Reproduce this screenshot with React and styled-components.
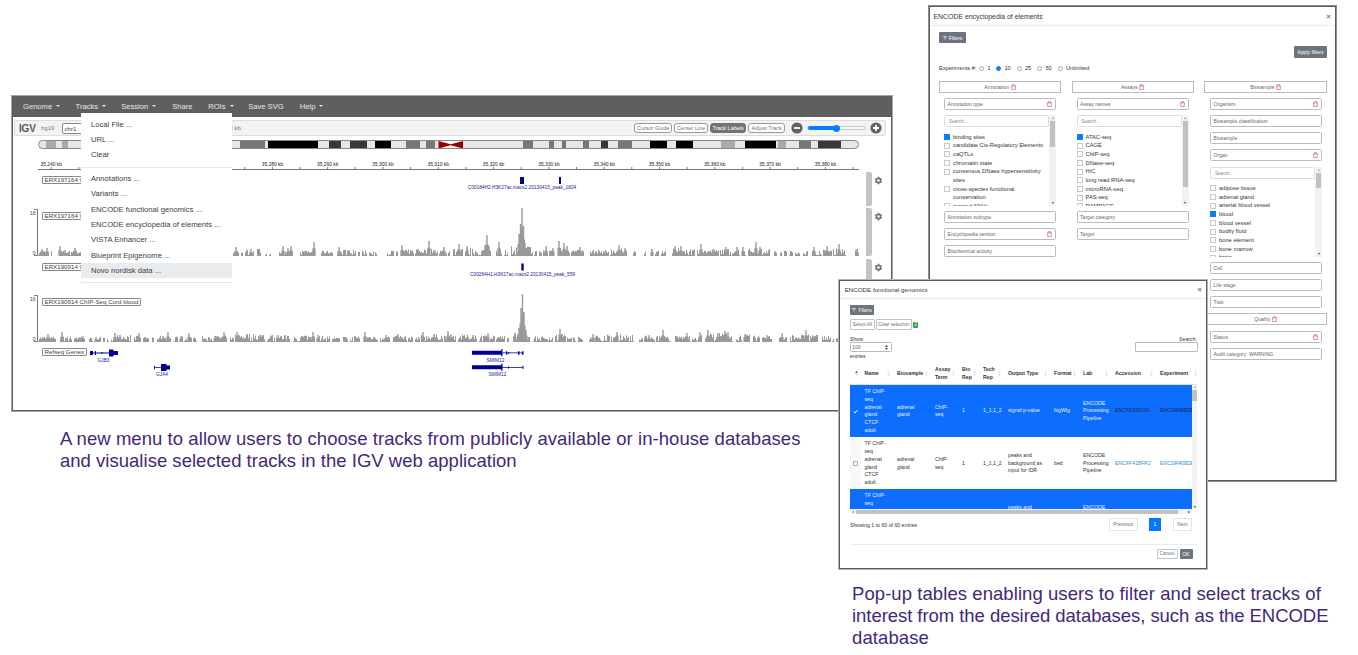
import React from "react";
import styled, { createGlobalStyle } from "styled-components";

const Global = createGlobalStyle`
  * { box-sizing: border-box; }
  body { margin: 0; background: #fff; overflow: hidden; font-family: "Liberation Sans", Arial, sans-serif; }
  svg { display: block; flex: none; }
`;

const Canvas = styled.main`
  position: relative;
  width: 1358px;
  height: 655px;
  background: #fff;
  overflow: hidden;
`;

const Frame = styled.section`
  position: absolute;
  left: ${(p) => p.$x + 1}px;
  top: ${(p) => p.$y + 1}px;
  width: ${(p) => p.$w - 2}px;
  height: ${(p) => p.$h - 2}px;
  border: 1px solid #5c5c5c;
  outline: 1px solid ${(p) => p.$halo};
  background: #fff;
  display: flex;
  flex-direction: column;
`;

const Caption = styled.p`
  position: absolute;
  left: ${(p) => p.$x}px;
  top: ${(p) => p.$y}px;
  margin: 0;
  font-size: 18.5px;
  line-height: 22px;
  color: #43277a;
  white-space: nowrap;
`;

const Line = styled.span`
  display: block;
  letter-spacing: ${(p) => p.$ls}px;
`;

/* ---------- genome browser ---------- */

const Nav = styled.nav`
  display: flex;
  align-items: center;
  height: 20px;
  padding: 0 0 2px 10px;
  background: #5f5f5f;
  color: #e8e8e8;
  font-size: 7.6px;
  flex: none;
`;

const NavItem = styled.span`
  display: flex;
  align-items: center;
  gap: 4px;
  width: ${(p) => p.$w}px;
  white-space: nowrap;
`;

const Caret = styled.i`
  border: 2px solid transparent;
  border-top-color: #e8e8e8;
  border-bottom: 0;
`;

const Toolbar = styled.div`
  display: flex;
  align-items: center;
  height: 16px;
  margin: 3px 5px 0 1px;
  padding: 0 3px 0 4px;
  border: 1px solid #dcdcdc;
  border-radius: 2px;
  background: #f3f3f3;
  color: #777;
  font-size: 6px;
  flex: none;
`;

const Logo = styled.b`
  width: 22px;
  font-size: 10px;
  letter-spacing: -0.2px;
  color: #5a5a5a;
`;

const Genome = styled.span`
  width: 20.5px;
`;

const ChrSelect = styled.span`
  width: 46px;
  height: 11px;
  padding-left: 2px;
  border: 1px solid #888;
  border-radius: 2px;
  background: #fff;
  color: #444;
  font-size: 6.2px;
  line-height: 9px;
`;

const Span = styled.span`
  flex: 1;
  padding-left: 122px;
`;

const Toggle = styled.span`
  width: ${(p) => p.$w}px;
  height: 10px;
  margin-right: 1.8px;
  border: 1px solid ${(p) => (p.$on ? "#737373" : "#999")};
  border-radius: 3px;
  background: ${(p) => (p.$on ? "#737373" : "#fff")};
  color: ${(p) => (p.$on ? "#fff" : "#777")};
  font-size: 5.5px;
  line-height: 8px;
  text-align: center;
  white-space: nowrap;
`;

const Zoom = styled.div`
  display: flex;
  align-items: center;
  gap: 4px;
  margin-left: 4px;
`;

const Slider = styled.div`
  display: flex;
  align-items: center;
  width: 59px;
  height: 4px;
  border: 1px solid #ccc;
  border-radius: 2px;
  background: #f7f7f7;
`;

const SliderFill = styled.div`
  width: 27px;
  height: 4px;
  border-radius: 2px 0 0 2px;
  background: #0a7bff;
  flex: none;
`;

const SliderThumb = styled.div`
  width: 7px;
  height: 7px;
  margin-left: -2px;
  border-radius: 50%;
  background: #0a7bff;
  flex: none;
`;

const TrackRow = styled.div`
  position: relative;
  display: flex;
  height: ${(p) => p.$h}px;
  margin-bottom: ${(p) => p.$gap}px;
  flex: none;
`;

const TrackHandle = styled.div`
  width: 6px;
  height: 100%;
  margin-left: 3px;
  border-radius: 0 2px 2px 0;
  background: #c4c4c4;
`;

const GearBox = styled.div`
  padding: 4px 0 0 2px;
`;

const TrackLabel = styled.span`
  position: absolute;
  left: 29px;
  top: ${(p) => p.$top}px;
  height: 8px;
  padding: 0 1.5px;
  border: 1px solid #888;
  border-radius: 1px;
  background: #fff;
  color: #444;
  font-size: 6.2px;
  line-height: 6px;
  white-space: nowrap;
`;

const Menu = styled.div`
  position: absolute;
  left: 68px;
  top: 16px;
  width: 151px;
  height: 171px;
  padding-top: 3.7px;
  background: #fff;
`;

const MenuItem = styled.div`
  height: 15.36px;
  padding-left: 10px;
  line-height: 15.4px;
  font-size: 7.65px;
  color: #3b4045;
  white-space: nowrap;
  background: ${(p) => (p.$active ? "#e9ecef" : "transparent")};
`;

const MenuLine = styled.hr`
  margin: ${(p) => p.$m};
  border: 0;
  border-top: 1px solid #e6e9ec;
`;

const bands = [
  [46, 56, "#aaa"], [62, 68, "#aaa"], [81, 84, "#777"], [240, 265, "#777"], [268, 318, "#000"],
  [329, 341, "#383838"], [350, 367, "#383838"], [375, 391, "#000"], [406, 420, "#777"], [426, 435, "#777"],
  [523, 533, "#777"], [549, 554, "#777"], [562, 566, "#777"], [583, 589, "#777"], [601, 608, "#383838"],
  [618, 632, "#777"], [650, 667, "#000"], [676, 693, "#000"], [721, 735, "#aaa"], [745, 776, "#000"],
  [778, 786, "#aaa"], [799, 811, "#777"], [818, 841, "#383838"],
];

const Ideogram = () => (
  <svg width="850" height="36" viewBox="13 136 850 36">
    <rect x="38.5" y="140.5" width="820" height="8" rx="4" fill="#e6e6e6" />
    {bands.map(([a, b, c]) => <rect key={a} x={a} y="141" width={b - a} height="7.5" fill={c} />)}
    <rect x="438.5" y="141" width="24.5" height="7.5" fill="#fff" />
    <path d="M438.5 141L450.7 144.3L463 141V148.5L450.7 145.2L438.5 148.5Z" fill="#960000" />
    <rect x="38.5" y="140.5" width="820" height="8" rx="4" fill="none" stroke="#888" />
    <path d="M38 169.5H859" stroke="#777" />
    {Array.from({ length: 15 }, (_, i) => {
      const x = 51.2 + i * 55.3;
      return (
        <g key={i}>
          <text x={x} y="166.3" textAnchor="middle" fontSize="4.9" fill="#222">{`35,${240 + i * 10} kb`}</text>
          <path d={`M${x} 167v2M${x + 27.6} 167v2`} stroke="#777" />
        </g>
      );
    })}
  </svg>
);

/* coverage: [start, end, base height], then [position, peak height] */
const runsA = [
  [38, 49, 3], [51, 52, 3], [60, 81, 3], [233, 239, 3], [241, 243, 4], [245, 254, 4], [257, 261, 5], [265, 267, 2], [269, 271, 2], [279, 293, 3],
  [300, 315, 3], [321, 333, 3], [337, 356, 4], [358, 360, 4], [362, 367, 4], [369, 374, 3], [375, 377, 3], [387, 394, 3], [396, 398, 3], [401, 414, 4], [415, 434, 5], [435, 438, 4],
  [439, 447, 4], [448, 450, 4], [453, 463, 5], [465, 471, 6], [472, 491, 5], [496, 502, 6], [504, 508, 4], [511, 533, 8], [534, 537, 3], [539, 542, 3],
  [543, 548, 4], [549, 554, 5], [558, 570, 9], [571, 584, 4], [590, 609, 4], [610, 627, 5], [633, 636, 3], [644, 646, 2],
  [651, 653, 4], [655, 659, 4], [661, 666, 4], [672, 695, 5], [697, 704, 5], [704, 719, 4], [720, 731, 5], [732, 740, 5], [742, 746, 5],
  [748, 770, 5], [774, 777, 3], [780, 782, 4], [784, 787, 4], [789, 793, 3], [795, 800, 3], [803, 808, 3], [812, 822, 4], [823, 832, 4], [833, 846, 5], [855, 859, 5],
];
const spikesA = [
  [42, 7], [47, 8], [60, 10], [65, 6], [75, 8], [236, 9], [251, 7], [283, 10], [288, 8], [291, 10], [305, 5], [314, 14], [339, 9], [349, 6],
  [402, 11], [418, 7], [429, 15], [435, 6], [444, 9], [459, 12], [467, 10], [487, 21], [485, 11], [489, 10], [499, 14], [519, 22], [522, 48],
  [520.5, 32], [523.5, 30], [525, 13], [546, 10], [553, 8], [559, 15], [564, 13], [567, 10], [580, 9], [619, 11], [625, 8], [652, 7], [675, 10], [681, 10],
  [701, 12], [713, 7], [726, 9], [737, 9], [743, 9], [756, 14], [760, 9], [814, 9], [827, 10], [839, 12], [857, 7],
];
const runsB = [
  [38, 56, 3], [60, 72, 3], [74, 85, 4], [89, 93, 2], [95, 101, 3], [103, 105, 2], [107, 109, 3], [111, 131, 5], [134, 141, 4],
  [143, 149, 4], [152, 154, 2], [157, 171, 4], [174, 178, 3], [180, 183, 3], [184, 192, 4], [193, 197, 3], [202, 227, 4], [230, 234, 2],
  [235, 265, 6], [267, 275, 5], [276, 290, 4], [293, 315, 5], [317, 330, 4], [332, 340, 2], [343, 348, 3], [350, 353, 3], [354, 360, 4],
  [364, 378, 4], [380, 390, 4], [393, 407, 4], [408, 413, 3], [415, 420, 4], [421, 443, 5], [444, 456, 5], [458, 477, 5],
  [479, 495, 5], [496, 505, 4], [507, 509, 2], [513, 530, 7], [533, 542, 4], [542, 553, 3], [555, 566, 5], [567, 572, 3],
  [573, 576, 3], [578, 583, 3], [589, 610, 5], [611, 634, 5], [639, 643, 2], [644, 655, 4], [656, 671, 4], [675, 691, 4], [692, 697, 3],
  [698, 702, 5], [705, 733, 7], [736, 742, 5], [744, 750, 5], [753, 760, 4], [762, 772, 4], [779, 787, 5], [790, 818, 5], [822, 831, 4], [832, 834, 3], [836, 839, 3],
];
const spikesB = [
  [48, 8], [62, 10], [83, 6], [96, 5], [115, 9], [120, 7], [139, 9], [145, 5], [163, 6], [168, 10], [181, 6], [189, 9], [215, 6], [224, 10],
  [237, 10], [247, 8], [260, 7], [278, 7], [285, 7], [313, 10], [318, 7], [365, 10], [386, 7], [398, 8], [423, 10], [434, 8],
  [448, 11], [451, 8], [473, 7], [488, 9], [515, 9], [522.5, 48], [521, 34], [524, 30], [526, 12], [519, 14], [560, 13], [562, 8],
  [593, 8], [617, 10], [649, 7], [663, 12], [687, 9], [700, 10], [708, 12], [718, 9], [725, 11], [728, 10], [745, 8], [767, 7], [782, 9],
  [806, 12], [815, 6],
];

function coverage(runs, spikes, base) {
  const heights = new Map();
  let seed = 7;
  const rnd = () => {
    seed = (seed * 16807) % 2147483647;
    return seed / 2147483647;
  };
  runs.forEach(([a, b, h]) => {
    for (let x = a; x < b; x += 1) heights.set(x, rnd() < 0.1 ? 1 : 2 + rnd() * (h + 0.5));
  });
  let d = "";
  heights.forEach((h, x) => { d += `M${x} ${base}v${-h}h1v${h}z`; });
  spikes.forEach(([x, h]) => {
    d += `M${x - 0.7} ${base}v${-h}h1.4v${h}z`;
    d += `M${x - 1.6} ${base}v${-h * 0.55}h3.2v${h * 0.55}z`;
  });
  return d;
}
const pathA = coverage(runsA, spikesA, 256);
const pathB = coverage(runsB, spikesB, 342);

const Axis = ({ top, bottom, max }) => (
  <g>
    <path d={`M34 ${top}.5H37.5V${bottom - 0.5}H34`} fill="none" stroke="#777" />
    <text x="35.5" y={top + 6} textAnchor="end" fontSize="5" fill="#444">{max}</text>
    <text x="35.5" y={bottom - 1} textAnchor="end" fontSize="5" fill="#444">0</text>
  </g>
);

const Gear = () => (
  <svg width="9" height="9" viewBox="0 0 24 24" fill="none" stroke="#707070">
    <circle cx="12" cy="12" r="5.6" strokeWidth="4" />
    <path d="M12 2v4M12 18v4M3.3 7l3.5 2M17.2 15l3.5 2M3.3 17l3.5-2M17.2 9l3.5-2" strokeWidth="4.5" />
  </svg>
);

const Track = ({ y, h, gap, label, labelTop, gear = true, children }) => (
  <TrackRow $h={h} $gap={gap}>
    <svg width="850" height={h} viewBox={`13 ${y} 850 ${h}`}>{children}</svg>
    {gear && <TrackHandle />}
    {gear && <GearBox><Gear /></GearBox>}
    <TrackLabel $top={labelTop}>{label}</TrackLabel>
  </TrackRow>
);

const ZoomButton = ({ plus }) => (
  <svg width="12" height="12" viewBox="0 0 12 12">
    <circle cx="6" cy="6" r="5.6" fill="#626262" />
    <path d={plus ? "M3 6h6M6 3v6" : "M3 6h6"} stroke="#fff" strokeWidth="1.8" />
  </svg>
);

const Browser = () => (
  <Frame $x={11} $y={95} $w={882} $h={317} $halo="#a6a6a6">
    <Nav>
      {[["Genome", 52.6, 1], ["Tracks", 45.6, 1], ["Session", 51, 1], ["Share", 36, 0], ["ROIs", 40, 1], ["Save SVG", 51.6, 0], ["Help", 30, 1]].map(([t, w, c]) => (
        <NavItem key={t} $w={w}>{t}{c ? <Caret /> : null}</NavItem>
      ))}
    </Nav>
    <Toolbar>
      <Logo>IGV</Logo>
      <Genome>hg19</Genome>
      <ChrSelect>chr1</ChrSelect>
      <Span>3 kb</Span>
      <Toggle $w={38}>Cursor Guide</Toggle>
      <Toggle $w={34}>Center Line</Toggle>
      <Toggle $w={36.5} $on>Track Labels</Toggle>
      <Toggle $w={37}>Adjust Track</Toggle>
      <Zoom>
        <ZoomButton />
        <Slider><SliderFill /><SliderThumb /></Slider>
        <ZoomButton plus />
      </Zoom>
    </Toolbar>
    <Ideogram />
    <Track y={172} h={34} gap={2} label="ERX197164 ChIP-Seq Cord blood" labelTop={4}>
      <path d="M520 177h4v7h-4zM559 177h2v7h-2z" fill="#00009a" />
      <text x="522" y="189.3" textAnchor="middle" fontSize="4.8" fill="#22229a">C00184H2.H3K27ac.macs2.20130415_peak_1824</text>
    </Track>
    <Track y={208} h={48} gap={3} label="ERX197164 ChIP-Seq Cord blood" labelTop={4}>
      <Axis top={209} bottom={256} max="18" />
      <path d={pathA} fill="#999" />
    </Track>
    <Track y={259} h={34} gap={1} label="ERX190914 ChIP-Seq Cord blood" labelTop={3.5}>
      <path d="M521.3 263.5h2.4v7h-2.4z" fill="#00009a" />
      <text x="522.5" y="275.5" textAnchor="middle" fontSize="4.75" fill="#22229a">C00264H1.H3K27ac.macs2.20130415_peak_559</text>
    </Track>
    <Track y={294} h={49} gap={2} label="ERX190914 ChIP-Seq Cord blood" labelTop={4}>
      <Axis top={295} bottom={342} max="16" />
      <path d={pathB} fill="#999" />
    </Track>
    <Track y={345} h={60} gap={0} label="Refseq Genes" labelTop={3} gear={false}>
      <path
        d="M90 351h3v4h-3zM95 351h1v4h-1zM101.500 352h1v2h-1zM109 349.500h4.500v7h-4.500zM109 351h9v4h-9zM90 352.600h28v.8h-28zM154 365.500h.8v4h-.8zM154 367.200h8v.8h-8zM161 364h5.500v7h-5.500zM161 365.600h9v4h-9zM472 350.800h30v4h-30zM501.200 349.300h1.300v7h-1.300zM502 352.500h21v.8h-21zM506 351.300h1.200v3.400h-1.200zM508.300 352h1v2h-1zM518 351.300h1.500v3.400h-1.500zM522 351.300h1.500v3.400h-1.500zM472 365.300h30v4h-30zM501.200 363.700h1.300v7h-1.300zM502 367h21v.8h-21zM508 366.400h1v2h-1zM522.500 365.800h1v3.200h-1z"
        fill="#00009a"
      />
      {[["GJB3", 103.5, 362], ["GJA4", 162, 376], ["SMIM12", 495.5, 362], ["SMIM12", 497.5, 376]].map(([t, x, y]) => (
        <text key={x} x={x} y={y} textAnchor="middle" fontSize="4.8" fill="#22229a">{t}</text>
      ))}
    </Track>
    <Menu>
      {["Local File ...", "URL ...", "Clear"].map((t) => <MenuItem key={t}>{t}</MenuItem>)}
      <MenuLine $m="4px 0 3.2px" />
      {["Annotations ...", "Variants ...", "ENCODE functional genomics ...", "ENCODE encyclopedia of elements ...", "VISTA Enhancer ...", "Blueprint Epigenome ...", "Novo nordisk data ..."].map((t) => (
        <MenuItem key={t} $active={t.startsWith("Novo")}>{t}</MenuItem>
      ))}
      <MenuLine $m="3.5px 0 0" />
    </Menu>
  </Frame>
);

/* ---------- shared dialog parts ---------- */

const DialogHead = styled.header`
  display: flex;
  align-items: center;
  justify-content: space-between;
  height: ${(p) => p.$h}px;
  padding: 0 4px 0 ${(p) => p.$pl}px;
  border-bottom: 1px solid #e9ecef;
  font-size: ${(p) => p.$fs}px;
  color: #33383d;
  flex: none;
`;

const Close = styled.b`
  font-size: 8px;
  color: #777;
`;

const DarkButton = styled.span`
  display: flex;
  align-items: center;
  justify-content: center;
  gap: 2px;
  width: ${(p) => p.$w}px;
  height: ${(p) => p.$h}px;
  border-radius: 1px;
  background: #6c757d;
  color: #fff;
  font-size: ${(p) => p.$fs || 5}px;
  white-space: nowrap;
`;

const FilterIcon = () => (
  <svg width="4" height="4" viewBox="0 0 4 4"><path d="M0 .5h4M.8 1.7h2.400M1.500 2.900h1" stroke="#fff" strokeWidth=".6" /></svg>
);

const Trash = () => (
  <svg width="5" height="6" viewBox="0 0 5 6" fill="none" stroke="#e25b65" strokeWidth=".7">
    <path d="M0 1.900h5M1.500 1.800V.6h2v1.200M.7 2V5.500h3.600V2" />
  </svg>
);

/* ---------- encyclopedia dialog ---------- */

const EncBody = styled.div`
  display: flex;
  flex-direction: column;
  padding: 6px 8px 0 9px;
`;

const ApplyRow = styled.div`
  display: flex;
  justify-content: flex-end;
  margin-top: 3px;
`;

const RadioRow = styled.div`
  display: flex;
  align-items: center;
  height: 9px;
  margin-top: 5.5px;
  font-size: 5.6px;
  color: #333;
  white-space: nowrap;
`;

const RadioLabel = styled.span`
  width: ${(p) => p.$w}px;
`;

const Radio = styled.i`
  width: 5px;
  height: 5px;
  margin-right: 3.5px;
  border: ${(p) => (p.$on ? "1px solid #1a7df0" : "1px solid #aaa")};
  border-radius: 50%;
  background: ${(p) => (p.$on ? "#1a7df0" : "#fff")};
  flex: none;
`;

const Columns = styled.div`
  display: flex;
  justify-content: space-between;
  margin-top: 8.5px;
`;

const Column = styled.div`
  width: ${(p) => p.$w}px;
  display: flex;
  flex-direction: column;
  gap: 5.12px;
`;

const GroupHead = styled.div`
  display: flex;
  align-items: center;
  justify-content: center;
  gap: 1.5px;
  height: 12px;
  border: 1px solid #bbb;
  color: #666;
  font-size: 5.2px;
  flex: none;
`;

const Field = styled.div`
  display: flex;
  align-items: center;
  justify-content: space-between;
  height: 12px;
  margin: 0 5px 0 ${(p) => p.$ml || 5}px;
  padding: 0 3px 0 2.5px;
  border: 1px solid #bbb;
  border-radius: 1.5px;
  color: #666;
  font-size: 5.1px;
  white-space: nowrap;
  flex: none;
`;

const PickList = styled.div`
  display: flex;
  height: 90.5px;
  margin: 0 5px 0 ${(p) => p.$ml || 5}px;
  overflow: hidden;
  flex: none;
`;

const PickMain = styled.div`
  flex: 1;
`;

const SearchBox = styled.div`
  height: 12px;
  margin-bottom: 5.5px;
  padding-left: 4px;
  border: 1px solid #ddd;
  border-radius: 1.5px;
  color: #888;
  font-size: 4.6px;
  line-height: 11px;
`;

const Pick = styled.div`
  display: flex;
  color: #333;
  font-size: 5.76px;
  line-height: 8.66px;
  white-space: pre;
`;

const Box = styled.i`
  width: 6px;
  height: 6px;
  margin: 1.300px 3px 0 0;
  border: 1px solid ${(p) => (p.$on ? "#0d7dfb" : "#c5cad0")};
  background: ${(p) => (p.$on ? "#0d7dfb" : "#fff")};
  flex: none;
`;

const ScrollBar = styled.div`
  display: flex;
  flex-direction: column;
  align-items: center;
  justify-content: space-between;
  width: 7px;
  padding: 2px 1px;
  background: #f2f2f2;
`;

const ScrollThumb = styled.div`
  width: 5px;
  height: ${(p) => p.$h}px;
  margin: 2px 0 auto;
  background: #c1c1c1;
`;

const Arrow = styled.i`
  border: 1.5px solid transparent;
  ${(p) => (p.$down ? "border-top: 2px solid #444; border-bottom: 0;" : "border-bottom: 2px solid #999; border-top: 0;")}
`;

const Picker = ({ items, on, thumb, ml }) => (
  <PickList $ml={ml}>
    <PickMain>
      <SearchBox>Search...</SearchBox>
      {items.map((t) => <Pick key={t}><Box $on={t === on} />{t}</Pick>)}
    </PickMain>
    <ScrollBar><Arrow /><ScrollThumb $h={thumb} /><Arrow $down /></ScrollBar>
  </PickList>
);

const F = ({ t, del, ml }) => <Field $ml={ml}>{t}{del && <Trash />}</Field>;
const G = ({ t }) => <GroupHead>{t}<Trash /></GroupHead>;

const Encyclopedia = () => (
  <Frame $x={928} $y={5} $w={409} $h={477} $halo="#8f8f8f">
    <DialogHead $h={19} $fs={6.9} $pl={3.5}>ENCODE encyclopedia of elements<Close>×</Close></DialogHead>
    <EncBody>
      <DarkButton $w={27} $h={11}><FilterIcon />Filters</DarkButton>
      <ApplyRow><DarkButton $w={33} $h={12}>Apply filters</DarkButton></ApplyRow>
      <RadioRow>
        <RadioLabel $w={40}>Experiments #:</RadioLabel>
        {[["1", 8.5], ["10", 12], ["25", 12], ["50", 12], ["Unlimited", 30]].map(([t, w]) => (
          <React.Fragment key={t}><Radio $on={t === "10"} /><RadioLabel $w={w}>{t}</RadioLabel></React.Fragment>
        ))}
      </RadioRow>
      <Columns>
        <Column $w={122}>
          <G t="Annotation" />
          <F t="Annotation type" del />
          <Picker thumb={26} on="binding sites" items={["binding sites", "candidate Cis-Regulatory Elements", "caQTLs", "chromatin state", "consensus DNase hypersensitivity\nsites", "cross-species functional\nconservation", "curated SNVs"]} />
          <F t="Annotation subtype" />
          <F t="Encyclopedia version" del />
          <F t="Biochemical activity" />
        </Column>
        <Column $w={122}>
          <G t="Assays" />
          <F t="Assay names" del />
          <Picker thumb={66} on="ATAC-seq" items={["ATAC-seq", "CAGE", "ChIP-seq", "DNase-seq", "HiC", "long read RNA-seq", "microRNA-seq", "PAS-seq", "RAMPAGE"]} />
          <F t="Target category" />
          <F t="Target" />
        </Column>
        <Column $w={123}>
          <G t="Biosample" />
          <F ml={6} t="Organism" del />
          <F ml={6} t="Biosample classification" />
          <F ml={6} t="Biosample" />
          <F ml={6} t="Organ" del />
          <Picker ml={6} thumb={15} on="blood" items={["adipose tissue", "adrenal gland", "arterial blood vessel", "blood", "blood vessel", "bodily fluid", "bone element", "bone marrow", "brain"]} />
          <F ml={6} t="Cell" />
          <F ml={6} t="Life stage" />
          <F ml={6} t="Trait" />
          <G t="Quality" />
          <F ml={6} t="Status" del />
          <F ml={6} t="Audit category: WARNING" />
        </Column>
      </Columns>
    </EncBody>
  </Frame>
);

/* ---------- functional genomics dialog ---------- */

const GenBody = styled.div`
  display: flex;
  flex-direction: column;
  padding: 6px 9px 0 10px;
  font-size: 5.2px;
  color: #333;
`;

const Row = styled.div`
  display: flex;
  align-items: center;
  justify-content: ${(p) => p.$j || "flex-start"};
  gap: ${(p) => p.$gap || 0}px;
  margin-top: ${(p) => p.$mt || 0}px;
  height: ${(p) => p.$h}px;
`;

const LightButton = styled.span`
  width: ${(p) => p.$w}px;
  height: ${(p) => p.$h || 11}px;
  border: 1px solid #c4c4c4;
  border-radius: 1px;
  color: #6c757d;
  font-size: 4.8px;
  line-height: ${(p) => (p.$h || 11) - 2}px;
  text-align: center;
  white-space: nowrap;
`;

const Badge = styled.span`
  width: 5px;
  height: 6px;
  border-radius: 1px;
  background: #28a745;
  color: #fff;
  font-size: 4.5px;
  line-height: 6px;
  text-align: center;
`;

const Entries = styled.span`
  display: flex;
  align-items: center;
  justify-content: space-between;
  width: 42px;
  height: 10px;
  padding: 0 3px 0 1px;
  border: 1px solid #bbb;
  border-radius: 1.5px;
  color: #666;
`;

const SearchInput = styled.span`
  width: 63px;
  height: 10px;
  margin-right: -1px;
  border: 1px solid #bbb;
  border-radius: 1px;
`;

const grid = "14.5px 32.5px 38px 27px 21px 25px 46px 29px 32px 45px 37px";

const THead = styled.div`
  display: grid;
  grid-template-columns: ${grid};
  height: 25px;
  margin-top: 1px;
  border-bottom: 1px solid #dee2e6;
  align-items: center;
  line-height: 7.8px;
  font-weight: bold;
`;

const TH = styled.div`
  display: flex;
  align-items: center;
  justify-content: space-between;
  padding: 3px 7px 0 0;
  white-space: pre;
  &:first-child { padding-left: 5px; }
  &:last-child { padding-right: 0; }
`;

const Viewport = styled.div`
  display: flex;
  height: 124px;
`;

const Rows = styled.div`
  width: 342px;
  overflow: hidden;
`;

const TR = styled.div`
  display: grid;
  grid-template-columns: ${grid};
  align-items: center;
  height: 52.2px;
  padding-top: 0.5px;
  line-height: 7.8px;
  white-space: pre;
  background: ${(p) => (p.$on ? "#0d6efd" : "#fff")};
  color: ${(p) => (p.$on ? "#e4eeff" : "#333")};
`;

const TickCell = styled.div`
  display: flex;
  align-items: center;
  height: 100%;
  padding-left: 3px;
  width: 11px;
  background: ${(p) => (p.$on ? "transparent" : "#f8f8f8")};
`;

const Tick = styled.i`
  width: 5px;
  height: 5px;
  border: 1px solid #aaa;
  border-radius: 1px;
  background: #fff;
`;

const Link = styled.span`
  color: ${(p) => (p.$on ? "#10264f" : "#2b8fe0")};
`;

const VScroll = styled(ScrollBar)`
  width: 5px;
  padding: 1px 0;
`;

const HScroll = styled.div`
  display: flex;
  align-items: center;
  width: 342px;
  height: 5px;
  padding: 0 2px;
  background: #f2f2f2;
`;

const HThumb = styled.div`
  width: 322px;
  height: 4px;
  margin-left: 2px;
  margin-right: auto;
  background: #c1c1c1;
`;

const SideArrow = styled.i`
  border: 1.5px solid transparent;
  ${(p) => (p.$right ? "border-left: 2px solid #333; border-right: 0;" : "border-right: 2px solid #888; border-left: 0;")}
`;

const Page = styled(LightButton)`
  font-size: 5.2px;
  border-color: ${(p) => (p.$on ? "#007bff" : "#e3e6e9")};
  border-radius: 0;
  background: ${(p) => (p.$on ? "#007bff" : "#fff")};
  color: ${(p) => (p.$on ? "#fff" : "#6c757d")};
`;

const Pages = styled.div`
  display: flex;
  gap: 11.5px;
  padding-right: 5px;
`;

const Foot = styled.footer`
  display: flex;
  justify-content: flex-end;
  gap: 2px;
  margin-top: 13px;
  padding: 4px 4.5px 0 0;
  border-top: 1px solid #e9ecef;
`;

const Sort = ({ first }) => (
  <svg width="3" height="5" viewBox="0 0 3 5">
    <path d="M1.500 0L3 2H0z" fill={first ? "#555" : "#ddd"} />
    <path d="M1.500 5L3 3H0z" fill="#ddd" />
  </svg>
);

const heads = ["", "Name", "Biosample", "Assay\nTerm", "Bio\nRep", "Tech\nRep", "Output Type", "Format", "Lab", "Accession", "Experiment"];
const data = [
  { on: true, out: "signal p-value", fmt: "bigWig", acc: "ENCFF250JJV" },
  { on: false, out: "peaks and\nbackground as\ninput for IDR", fmt: "bed", acc: "ENCFF418FRJ" },
  { on: true, out: "peaks and\nbackground as\ninput for IDR", fmt: "bed", acc: "ENCFF002ABC" },
];

const Genomics = () => (
  <Frame $x={838} $y={279} $w={370} $h={291} $halo="#b4b4b4">
    <DialogHead $h={18} $fs={6.2} $pl={4.7}>ENCODE functional genomics<Close>×</Close></DialogHead>
    <GenBody>
      <DarkButton $w={24} $h={10} $fs={4.8}><FilterIcon />Filters</DarkButton>
      <Row $mt={4} $h={11} $gap={1}>
        <LightButton $w={24.5}>Select All</LightButton>
        <LightButton $w={36.5}>Clear selection</LightButton>
        <Badge>2</Badge>
      </Row>
      <Row $mt={5} $h={7} $j="space-between"><span>Show</span><span>Search:</span></Row>
      <Row $h={10} $j="space-between">
        <Entries>100<svg width="3" height="5" viewBox="0 0 3 5"><path d="M1.500 0L3 2H0zM1.500 5L3 3H0z" fill="#444" /></svg></Entries>
        <SearchInput />
      </Row>
      <Row $h={7}>entries</Row>
      <THead>{heads.map((t, i) => <TH key={i}>{t}<Sort first={i === 0} /></TH>)}</THead>
      <Viewport>
        <Rows>
          {data.map((r) => (
            <TR key={r.acc} $on={r.on}>
              <TickCell $on={r.on}>
                {r.on ? <svg width="5" height="5" viewBox="0 0 5 5"><path d="M.7 2.600L2 4L4.500 1" fill="none" stroke="#fff" /></svg> : <Tick />}
              </TickCell>
              <span>{"TF ChIP-\nseq\nadrenal\ngland\nCTCF\nadult"}</span>
              <span>{"adrenal\ngland"}</span>
              <span>{"ChIP-\nseq"}</span>
              <span>1</span>
              <span>1_1,1_2</span>
              <span>{r.out}</span>
              <span>{r.fmt}</span>
              <span>{"ENCODE\nProcessing\nPipeline"}</span>
              <Link $on={r.on}>{r.acc}</Link>
              <Link $on={r.on}>ENCSR408ZEX</Link>
            </TR>
          ))}
        </Rows>
        <VScroll><Arrow /><ScrollThumb $h={11} /><Arrow $down /></VScroll>
      </Viewport>
      <HScroll><SideArrow /><HThumb /><SideArrow $right /></HScroll>
      <Row $mt={4} $h={13} $j="space-between">
        <Row $h={7}>Showing 1 to 60 of 60 entries</Row>
        <Pages>
          <Page $w={28.500} $h={13}>Previous</Page>
          <Page $w={12} $h={13} $on>1</Page>
          <Page $w={19.5} $h={13}>Next</Page>
        </Pages>
      </Row>
      <Foot>
        <LightButton $w={21} $h={10}>Cancel</LightButton>
        <DarkButton $w={13} $h={10}>OK</DarkButton>
      </Foot>
    </GenBody>
  </Frame>
);

export default function App() {
  return (
    <Canvas>
      <Global />
      <Browser />
      <Caption $x={60} $y={428}>
        <Line $ls={0.06}>A new menu to allow users to choose tracks from publicly available or in-house databases</Line>
        <Line $ls={0.02}>and visualise selected tracks in the IGV web application</Line>
      </Caption>
      <Encyclopedia />
      <Genomics />
      <Caption $x={852} $y={583}>
        <Line $ls={0.07}>Pop-up tables enabling users to filter and select tracks of</Line>
        <Line $ls={-0.05}>interest from the desired databases, such as the ENCODE</Line>
        <Line $ls={0.1}>database</Line>
      </Caption>
    </Canvas>
  );
}
